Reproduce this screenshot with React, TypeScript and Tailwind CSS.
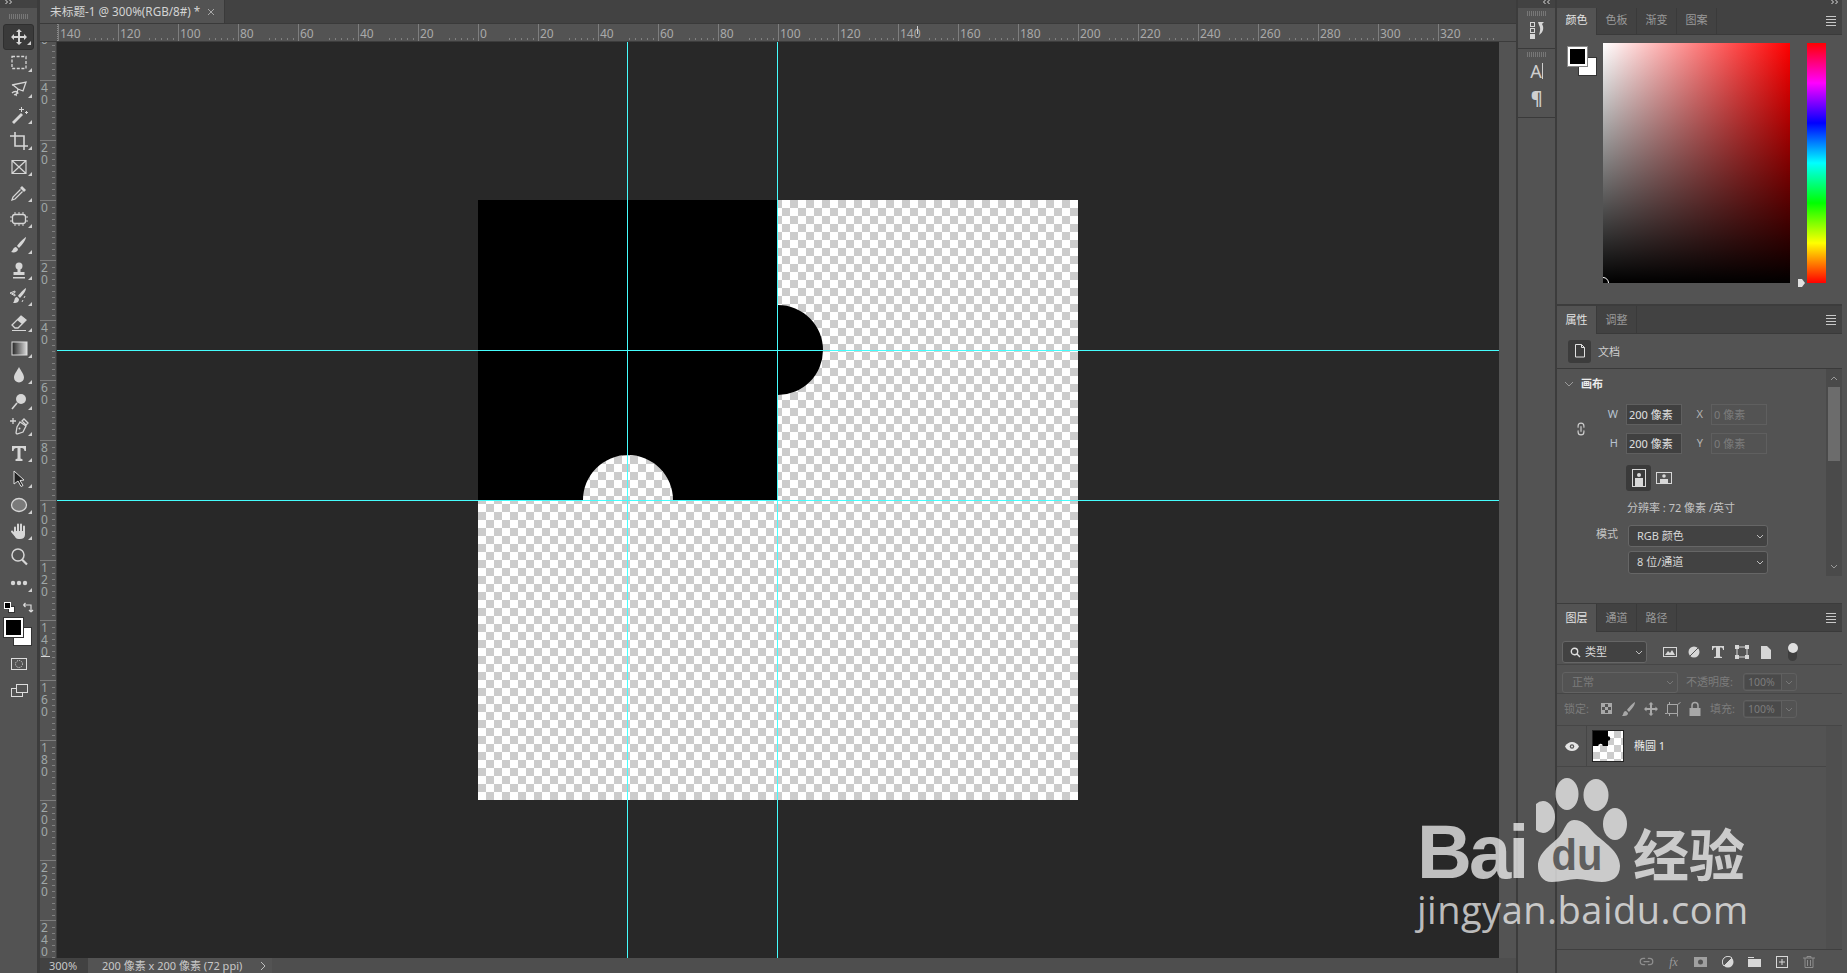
import type { ReactNode } from "react";
import { Link2 } from "lucide-react";

const font = "[font-family:'Noto_Sans','Noto_Sans_CJK_SC',sans-serif]";

function Ico({ children, size = 20 }: { children: ReactNode; size?: number }) {
  return (
    <svg width={size} height={size} viewBox="0 0 20 20" fill="currentColor" stroke="none">
      {children}
    </svg>
  );
}

const line = { fill: "none", stroke: "currentColor", strokeWidth: 1.3 };

const tools: ReactNode[] = [
  <path d="M10 2l3 3h-2v4h4V7l3 3-3 3v-2h-4v4h2l-3 3-3-3h2v-4H5v2l-3-3 3-3v2h4V5H7z" />,
  <rect x="3" y="3.500" width="14" height="12" {...line} strokeDasharray="3 1.600" />,
  <path d="M3 6l14-3-3 9-5-2-5-4zM9 10l-2 7M3 14c2-2 5-2 6 0l-4 2" {...line} />,
  <g><path d="M3 17l9-9 2 2-9 9z" /><path d="M12 2h1v2h2v1h-2v2h-1V5h-2V4h2zM17 6h1v1h1v1h-1v1h-1V8h-1V7h1z" /></g>,
  <path d="M1 5h5v10h10M6 1v4h9v12M15 15v4M16 15h3" {...line} strokeWidth={1.600} />,
  <path d="M3 3.500h14v13H3zM3 3.500l14 13M17 3.500L3 16.500" {...line} strokeWidth={1.200} />,
  <g><path d="M13 3l4 4-2 2-4-4z" /><path d="M11.500 6.500l-7.500 7.500-1 3 3-1 7.500-7.500" {...line} /></g>,
  <g><rect x="3.500" y="5.500" width="13" height="9" rx="2.500" {...line} /><path d="M6 3v2M10 3v2M14 3v2M6 15v2M10 15v2M14 15v2M1 8h2M1 12h2M17 8h2M17 12h2" {...line} strokeWidth={1} /></g>,
  <path d="M17 2c-2 1-7 6-9 9l2 2c3-3 7-8 7-11zM7 12c-3 0-3 4-5 5 3 1 7 0 7-3z" />,
  <g><circle cx="10" cy="5" r="3.500" /><path d="M8.500 8h3v3h4v3h-11v-3h4zM4 16h12v1.500H4z" /></g>,
  <g><path d="M17 1c-2 1-6 5-8 8l2 2c3-3 6-7 6-10zM8 10c-3 0-2 4-4 6 3 0 6 0 6-4z" /><path d="M1 6l5-2v1.500L3 6.500l3 1V9zM13 15l1-2M15 11l1-2" {...line} strokeWidth={1} /></g>,
  <g><path d="M12 3l5 4-8 8H6l-3-3z" {...line} /><path d="M12 3l5 4-4 4-5-4zM3 17h14v1H3z" /></g>,
  <g>
    <defs><linearGradient id="grad"><stop offset="0" stopColor="#222" /><stop offset="1" stopColor="#ddd" /></linearGradient></defs>
    <rect x="3" y="3" width="15" height="13" fill="url(#grad)" stroke="#ddd" strokeWidth="1" />
  </g>,
  <path d="M10 2c2 4 5 7 5 10.500a5 5 0 0 1-10 0C5 9 8 6 10 2z" />,
  <g><circle cx="12" cy="8" r="5" /><path d="M8 12l-5 6" {...line} strokeWidth={1.600} /></g>,
  <g><path d="M11 5l6 4-3 6-6 2-1-1 1-6z" {...line} /><path d="M13 4l2-2 4 4-2 2zM1 4h6M4 1v6" {...line} /><circle cx="10.500" cy="11.500" r="1" /></g>,
  <path d="M3 3h14v5h-1.500c-.3-2-1-3-3-3H11.500v10.500l2 .7V18H6.500v-1.800l2-.7V5H7.500c-2 0-2.700 1-3 3H3z" />,
  <path d="M5 2l10 9-4 .5 3 5-2 1-3-5.500-4 3z" stroke="#ddd" strokeWidth="1" fill="#222" />,
  <ellipse cx="10" cy="10" rx="7.500" ry="6.500" fill="#7a7a7a" stroke="currentColor" strokeWidth="1.300" />,
  <g>
    <path d="M6 6.500v6M9 3.500v8M12 3.500v8M15 5.500v7M3 10.500l3 3.500" fill="none" stroke="currentColor" strokeWidth="2" strokeLinecap="round" />
    <path d="M5.500 10h10.500v3.500c0 3-2 4.500-5 4.500H9.500c-2 0-3-1-4-3z" />
  </g>,
  <g><circle cx="9" cy="8" r="6" {...line} strokeWidth={1.500} /><path d="M13 12.500l5 5" {...line} strokeWidth={2.200} /></g>,
  <g><circle cx="4" cy="10" r="2.200" /><circle cx="10" cy="10" r="2.200" /><circle cx="16" cy="10" r="2.200" /></g>,
];

function Chevrons({ left }: { left?: boolean }) {
  return (
    <svg width="8" height="4" viewBox="0 0 8 4" fill="none" stroke="#dddddd" className={left ? "rotate-180" : ""}>
      <path d="M0.500 0l2 2-2 2M4.500 0l2 2-2 2" />
    </svg>
  );
}

function Tools() {
  return (
    <div className="w-[37px] shrink-0 flex flex-col text-[#d6d6d6] bg-[#535353]">
      <div className="h-[8px] bg-[#424242] pl-[5px]"><Chevrons /></div>
      <div className="h-[16px] flex items-center justify-center">
        <div className="w-[19px] h-[5px] bg-[repeating-linear-gradient(to_right,#777_0,#777_1px,transparent_1px,transparent_2px)]" />
      </div>
      {tools.map((t, i) => (
        <div key={i} className={`relative h-[26px] mx-[3px] flex items-center justify-center rounded-[3px] ${i === 0 ? "bg-[#3a3a3a] border border-[#2f2f2f]" : ""}`}>
          <Ico>{t}</Ico>
          {i !== 20 && <span className="absolute right-[2px] bottom-[4px] w-[4px] h-[4px] bg-[#cfcfcf] [clip-path:polygon(100%_0,100%_100%,0_100%)]" />}
        </div>
      ))}
      {/* default colours + swap */}
      <div className="mt-[3px] h-[16px] flex items-center pl-[4px] gap-[8px]">
        <div className="relative w-[11px] h-[11px]">
          <span className="absolute left-0 top-0 w-[7px] h-[7px] bg-black border border-white z-10" />
          <span className="absolute right-0 bottom-0 w-[7px] h-[7px] bg-white border border-[#333]" />
        </div>
        <svg width="11" height="11" viewBox="0 0 11 11" fill="none" stroke="#ddd" strokeWidth="1.200">
          <path d="M1 3h7v6M0.500 3l2-2M0.500 3l2 2M8 10l-2-2M8 10l2-2" />
        </svg>
      </div>
      <div className="relative h-[30px] mt-[3px] ml-[4px]">
        <span className="absolute left-[9px] top-[9px] w-[19px] h-[19px] bg-white border border-[#333]" />
        <span className="absolute left-0 top-0 w-[19px] h-[19px] bg-black border-2 border-white outline outline-[#333]" />
      </div>
      <div className="mt-[9px] flex justify-center">
        <svg width="18" height="14" viewBox="0 0 18 14" fill="none" stroke="#ddd">
          <rect x="1.500" y="1.500" width="15" height="11" />
          <circle cx="9" cy="7" r="3.500" strokeDasharray="1 1" />
        </svg>
      </div>
      <div className="mt-[12px] flex justify-center">
        <svg width="18" height="14" viewBox="0 0 18 14" fill="none" stroke="#ddd">
          <rect x="1.500" y="5.500" width="11" height="8" />
          <rect x="6.500" y="1.500" width="11" height="8" fill="#535353" />
        </svg>
      </div>
    </div>
  );
}

function HTicks() {
  return (
    <svg className="absolute left-0 bottom-0" width="60" height="6" stroke="#808080">
      {Array.from({ length: 5 }, (_, i) => {
        const x = (i + 5) * 6 + 0.500;
        return <line key={i} x1={x} x2={x} y1={3} y2={5} />;
      })}
    </svg>
  );
}

function VTicks() {
  return (
    <svg className="absolute right-0 top-0" width="6" height="60" stroke="#808080">
      {Array.from({ length: 9 }, (_, i) => {
        const y = (i + 1) * 6 + 0.500;
        return <line key={i} y1={y} y2={y} x1={2} x2={5} />;
      })}
    </svg>
  );
}

const hLabels = [140, 120, 100, 80, 60, 40, 20, 0, 20, 40, 60, 80, 100, 120, 140, 160, 180, 200, 220, 240, 260, 280, 300, 320];
const vLabels = [60, 40, 20, 0, 20, 40, 60, 80, 100, 120, 140, 160, 180, 200, 220, 240];

function HRuler() {
  return (
    <div className="relative h-[18px] flex bg-[#535353] border-b border-[#3c3c3c] overflow-hidden">
      <div className="w-[18px] shrink-0 border-r border-dotted border-[#8c8c8c] bg-[#535353]" />
      {hLabels.map((n, i) => (
        <div key={i} className="relative w-[60px] shrink-0 border-l border-[#7d7d7d] pl-[1px] text-[12px] leading-[20px] text-[#a9a9a9]">
          {n}
          <HTicks />
        </div>
      ))}
      <span className="absolute left-[877px] top-[2px] w-[1px] h-[8px] bg-[#cfcfcf]" />
    </div>
  );
}

function VRuler() {
  return (
    <div className="relative w-[17px] shrink-0 bg-[#535353] overflow-hidden border-r border-[#3c3c3c]">
      <div className="mt-[-22px] flex flex-col">
        {vLabels.map((n, i) => (
          <div key={i} className="relative h-[60px] shrink-0 border-t border-[#7d7d7d] pl-[1px] pt-[1px] text-[12px] leading-[12px] text-[#a0a8a8]">
            {String(n).split("").map((d, j) => (
              <div key={j}>{d}</div>
            ))}
            <VTicks />
          </div>
        ))}
      </div>
      <span className="absolute left-[1px] top-[614px] w-[9px] h-[1px] bg-[#d8d8d8]" />
    </div>
  );
}

function Canvas() {
  return (
    <div className="relative w-[1442px] shrink-0 bg-[#282828] pl-[421px] pt-[158px] overflow-hidden">
      <div className="relative w-[600px] h-[600px] bg-[repeating-conic-gradient(#cccccc_0_25%,#ffffff_0_50%)] bg-[length:16px_16px]">
        <svg className="absolute inset-0" width="600" height="600" viewBox="0 0 600 600">
          <path d="M0 0H300V105A45 45 0 0 1 300 195V300H195A45 45 0 0 0 105 300H0Z" fill="#000" />
        </svg>
      </div>
      <span className="absolute left-[570px] top-0 bottom-0 w-[1px] bg-[#45fdfd]" />
      <span className="absolute left-[720px] top-0 bottom-0 w-[1px] bg-[#45fdfd]" />
      <span className="absolute top-[308px] left-0 right-0 h-[1px] bg-[#45fdfd]" />
      <span className="absolute top-[458px] left-0 right-0 h-[1px] bg-[#45fdfd]" />
    </div>
  );
}

function Main() {
  return (
    <div className="w-[1476px] shrink-0 flex flex-col">
      <div className="h-[24px] bg-[#424242] border-b border-[#3a3a3a] flex">
        <div className="w-[185px] bg-[#535353] flex items-center pl-[10px] text-[11.700px] text-[#d4d4d4] border-r border-[#3a3a3a] whitespace-nowrap">
          未标题-1 @ 300%(RGB/8#) *
          <svg className="ml-[7px]" width="8" height="8" stroke="#a8a8a8" viewBox="0 0 8 8">
            <path d="M1 1l6 6M7 1L1 7" />
          </svg>
        </div>
      </div>
      <HRuler />
      <div className="flex-1 flex min-h-0">
        <VRuler />
        <Canvas />
        <div className="flex-1 bg-[#535353]" />
      </div>
      <div className="h-[15px] flex bg-[#4e4e4e] text-[11px] leading-[15px] text-[#c8c8c8]">
        <div className="w-[48px] bg-[#424242] pl-[9px]">300%</div>
        <div className="w-[184px] bg-[#535353] pl-[14px] flex items-center justify-between pr-[6px] whitespace-nowrap">
          <span>200 像素 x 200 像素 (72 ppi)</span>
          <svg width="6" height="10" viewBox="0 0 6 10" fill="none" stroke="#bdbdbd"><path d="M1 1l4 4-4 4" /></svg>
        </div>
      </div>
    </div>
  );
}

function Grip() {
  return (
    <div className="h-[9px] flex items-center justify-center">
      <div className="w-[19px] h-[5px] bg-[repeating-linear-gradient(to_right,#777_0,#777_1px,transparent_1px,transparent_2px)]" />
    </div>
  );
}

function Dock() {
  return (
    <div className="w-[37px] shrink-0 flex flex-col bg-[#535353] text-[#d6d6d6]">
      <div className="h-[8px] bg-[#424242] pl-[24px]"><Chevrons left /></div>
      <div className="h-[41px] border-b border-[#3a3a3a] pt-[1px]">
        <Grip />
        <div className="flex justify-center pt-[3px]">
          <svg width="16" height="18" viewBox="0 0 16 18">
            <rect x="1.500" y="1.500" width="4" height="4" fill="none" stroke="#d6d6d6" />
            <rect x="1.500" y="7.500" width="4" height="4" fill="none" stroke="#d6d6d6" />
            <rect x="1" y="13" width="5" height="5" fill="#d6d6d6" />
            <path d="M9 1h6l-2 2c2 3 2 8-3 11 1-3 2-7 0-10z" fill="#d6d6d6" />
          </svg>
        </div>
      </div>
      <div className="h-[69px] border-b border-[#3a3a3a] pt-[1px]">
        <Grip />
        <div className="flex justify-center items-center h-[24px] text-[18px] leading-[24px] text-[#cfcfcf]">
          A<span className="w-[1px] h-[16px] bg-[#cfcfcf]" />
        </div>
        <div className="flex justify-center items-center h-[30px] text-[18px] font-bold text-[#cfcfcf]">¶</div>
      </div>
    </div>
  );
}

function Tabs({ items, compact }: { items: string[]; compact?: boolean }) {
  return (
    <div className={`shrink-0 flex bg-[#424242] border-b border-[#3a3a3a] ${compact ? "h-[27px]" : "h-[28px]"}`}>
      {items.map((t, i) => (
        <div key={t} className={`w-[40px] flex items-center justify-center text-[11px] border-r border-[#3a3a3a] ${compact ? "h-[27px] pb-[2px]" : "h-[28px]"} ${i === 0 ? "bg-[#535353] text-[#e4e4e4]" : "text-[#9a9a9a]"}`}>
          {t}
        </div>
      ))}
      <div className="ml-auto mr-[6px] flex flex-col justify-center gap-[2px]">
        <span className="w-[10px] h-[1px] bg-[#c8c8c8]" />
        <span className="w-[10px] h-[1px] bg-[#c8c8c8]" />
        <span className="w-[10px] h-[1px] bg-[#c8c8c8]" />
        <span className="w-[10px] h-[1px] bg-[#c8c8c8]" />
      </div>
    </div>
  );
}

function ColorPanel() {
  return (
    <div className="h-[296px] shrink-0 bg-[#535353] flex flex-col">
      <Tabs items={["颜色", "色板", "渐变", "图案"]} compact />
      <div className="flex pt-[8px]">
        <div className="relative w-[46px] h-[36px] shrink-0">
          <span className="absolute left-[21px] top-[14px] w-[19px] h-[19px] bg-white border border-[#333]" />
          <span className="absolute left-[11px] top-[4px] w-[19px] h-[19px] bg-black border-2 border-white outline outline-[#888]" />
        </div>
        <div className="relative w-[187px] h-[240px] shrink-0 overflow-hidden bg-[linear-gradient(to_top,#000,transparent),linear-gradient(to_right,#fff,#f00)]">
          <span className="absolute left-[-6px] bottom-[-6px] w-[12px] h-[12px] rounded-full border border-white" />
        </div>
        <div className="relative ml-[17px] w-[19px] h-[240px] shrink-0 bg-[linear-gradient(to_bottom,#f00,#f0f,#00f,#0ff,#0f0,#ff0,#f00)]">
          <svg className="absolute left-[-10px] bottom-[-4px]" width="9" height="8" viewBox="0 0 9 8">
            <path d="M1 0h4l3 4-3 4H1z" fill="#e0e0e0" />
          </svg>
        </div>
      </div>
    </div>
  );
}

function Field({ label, value, off }: { label: string; value: string; off?: boolean }) {
  return (
    <div className="flex items-center">
      <span className={`w-[28px] text-right text-[11px] ${off ? "text-[#b4b4b4]" : "text-[#b8c4d0]"}`}>{label}</span>
      <div className={`ml-[8px] w-[56px] h-[21px] border border-[#5f5f5f] pl-[2px] text-[11px] leading-[19px] ${off ? "text-[#7c7c7c]" : "bg-[#404040] text-[#e0e0e0]"}`}>
        {value}
      </div>
    </div>
  );
}

function Select({ text, className }: { text: string; className?: string }) {
  return (
    <div className={`flex items-center justify-between rounded-[3px] bg-[#424242] border border-[#666] pl-[8px] pr-[3px] text-[11px] text-[#d8d8d8] ${className ?? ""}`}>
      <span>{text}</span>
      <svg width="8" height="5" viewBox="0 0 8 5" fill="none" stroke="#bdbdbd"><path d="M1 1l3 3 3-3" /></svg>
    </div>
  );
}

function PropsPanel() {
  return (
    <div className="h-[297px] shrink-0 bg-[#535353] flex flex-col">
      <Tabs items={["属性", "调整"]} />
      <div className="h-[35px] shrink-0 border-b border-[#3a3a3a] flex items-center pl-[11px]">
        <div className="w-[23px] h-[23px] rounded-[3px] bg-[#3c3c3c] flex items-center justify-center">
          <svg width="12" height="14" viewBox="0 0 12 14" fill="none" stroke="#e0e0e0"><path d="M1.500.5h6l3 3v9.500h-9zM7.500.5v3h3" /></svg>
        </div>
        <span className="ml-[7px] mt-[3px] text-[11px] text-[#cfcfcf]">文档</span>
      </div>
      <div className="flex-1 flex items-start">
        <div className="w-[269px] shrink-0">
          <div className="mt-[7px] h-[16px] flex items-center pl-[7px]">
            <svg width="10" height="6" viewBox="0 0 10 6" fill="none" stroke="#9a9a9a"><path d="M1 1l4 4 4-4" /></svg>
            <span className="ml-[7px] text-[11px] font-bold text-[#ececec]">画布</span>
          </div>
          <div className="mt-[12px] flex items-center">
            <div className="w-[33px] pl-[17px] shrink-0 text-[#cfcfcf]"><Link2 size={14} className="rotate-90" /></div>
            <div className="flex flex-col gap-[8px]">
              <div className="flex"><Field label="W" value="200 像素" /><div className="ml-[-7px]"><Field label="X" value="0 像素" off /></div></div>
              <div className="flex"><Field label="H" value="200 像素" /><div className="ml-[-7px]"><Field label="Y" value="0 像素" off /></div></div>
            </div>
          </div>
          <div className="mt-[11px] pl-[69px] flex items-center">
            <div className="w-[25px] h-[26px] rounded-[3px] bg-[#3a3a3a] flex items-center justify-center">
              <svg width="14" height="18" viewBox="0 0 14 18" fill="#d8d8d8"><rect x=".5" y=".5" width="13" height="17" fill="none" stroke="#d8d8d8" /><circle cx="7" cy="6" r="2" /><rect x="3" y="9" width="8" height="8" /></svg>
            </div>
            <div className="ml-[5px]">
              <svg width="16" height="12" viewBox="0 0 16 12" fill="#d8d8d8"><rect x=".5" y=".5" width="15" height="11" fill="none" stroke="#d8d8d8" /><circle cx="8" cy="4" r="1.800" /><rect x="4" y="7" width="8" height="5" /></svg>
            </div>
          </div>
          <div className="mt-[9px] pl-[70px] text-[11px] leading-[16px] text-[#c4c4c4]">分辨率 : 72 像素 /英寸</div>
          <div className="mt-[9px] flex items-center">
            <span className="w-[61px] text-right text-[11px] text-[#c4c4c4] -mt-[3px]">模式</span>
            <Select text="RGB 颜色" className="ml-[10px] w-[140px] h-[22px]" />
          </div>
          <Select text="8 位/通道" className="mt-[4px] ml-[71px] w-[140px] h-[23px]" />
        </div>
        <div className="w-[16px] h-[207px] bg-[#4a4a4a] flex flex-col items-center pt-[1px]">
          <svg className="my-[6px]" width="8" height="5" viewBox="0 0 8 5" fill="none" stroke="#999"><path d="M1 4l3-3 3 3" /></svg>
          <div className="w-[12px] h-[74px] bg-[#6c6c6c]" />
          <svg className="mt-auto mb-[7px]" width="8" height="5" viewBox="0 0 8 5" fill="none" stroke="#999"><path d="M1 1l3 3 3-3" /></svg>
        </div>
      </div>
    </div>
  );
}

const filterIcons: ReactNode[] = [
  <g><rect x="3.500" y="5.500" width="13" height="9" fill="none" stroke="currentColor" /><path d="M5 13l3-4 2 2 2-3 3 5z" /></g>,
  <g><circle cx="10" cy="10" r="5.500" /><path d="M6 14L14 6" stroke="#535353" /></g>,
  <path d="M4 4h12v4h-1c0-2-1-2.500-3-2.500V14.500l2 .5v1H6v-1l2-.5V5.500C6 5.500 5 6 5 8H4z" />,
  <g><rect x="5" y="5" width="10" height="10" fill="none" stroke="currentColor" /><path d="M3 3h4v4H3zM13 3h4v4h-4zM3 13h4v4H3zM13 13h4v4h-4z" /></g>,
  <path d="M5 4h6l4 4v9H5zM9 8h6v9H9z" />,
];

const lockIcons: ReactNode[] = [
  <g><rect x="4.500" y="4.500" width="10" height="10" fill="none" stroke="currentColor" /><path d="M5 5h3v3H5zM11 5h3v3h-3zM8 8h3v3H8zM5 11h3v3H5zM11 11h3v3h-3z" /></g>,
  <path d="M16 3c-2 1-6 5-8 8l2 2c3-3 6-7 6-10zM7 12c-3 0-2 3-4 5 3 0 6 0 6-3z" />,
  <path d="M10 3l2.500 2.500H11V9h3.500V7.500L17 10l-2.500 2.500V11H11v3.500h1.500L10 17l-2.500-2.500H9V11H5.500v1.500L3 10l2.500-2.500V9H9V5.500H7.500z" />,
  <path d="M4.500 5.500h10v9h-10zM6.500 3v2M2 14.500h2M14.500 14.500v3M14.500 5.500l3-2M6.500 15v2" fill="none" stroke="currentColor" />,
  <g><rect x="4.500" y="9" width="11" height="8" /><path d="M7 9V6.500a3 3 0 0 1 6 0V9" fill="none" stroke="currentColor" strokeWidth="1.500" /></g>,
];

function SmallPct() {
  return (
    <div className="w-[54px] h-[18px] rounded-[3px] border border-[#606060] flex items-center text-[10.500px] text-[#7c7c7c]">
      <span className="w-[36px] h-[14px] ml-[1px] bg-[#4a4a4a] pl-[3px] leading-[14px]">100%</span>
      <span className="flex-1 flex justify-center border-l border-[#606060] h-full items-center">
        <svg width="8" height="5" viewBox="0 0 8 5" fill="none" stroke="#777"><path d="M1 1l3 3 3-3" /></svg>
      </span>
    </div>
  );
}

function LayersPanel() {
  return (
    <div className="flex-1 min-h-0 bg-[#535353] flex flex-col">
      <Tabs items={["图层", "通道", "路径"]} />
      <div className="h-[33px] shrink-0 border-b border-[#464646] flex items-center pl-[5px] pt-[8px] text-[#d6d6d6]">
        <div className="w-[85px] h-[22px] rounded-[3px] bg-[#424242] border border-[#666] flex items-center pl-[7px] pr-[3px] text-[11px] text-[#d8d8d8]">
          <svg width="11" height="11" viewBox="0 0 11 11" fill="none" stroke="#e0e0e0" strokeWidth="1.400"><circle cx="4.500" cy="4.500" r="3.200" /><path d="M7 7l3 3" /></svg>
          <span className="ml-[4px]">类型</span>
          <svg className="ml-auto" width="8" height="5" viewBox="0 0 8 5" fill="none" stroke="#bdbdbd"><path d="M1 1l3 3 3-3" /></svg>
        </div>
        <div className="ml-[13px] flex gap-[4px]">
          {filterIcons.map((c, i) => (
            <Ico key={i}>{c}</Ico>
          ))}
        </div>
        <div className="relative ml-[12px] w-[9px] h-[18px] rounded-full bg-[#3e3e3e]">
          <span className="absolute left-[-.5px] top-0 w-[10px] h-[10px] rounded-full bg-[#e0e0e0]" />
        </div>
      </div>
      <div className="h-[29px] shrink-0 border-b border-[#464646] flex items-center pl-[5px] pt-[6px] text-[11px] text-[#7c7c7c]">
        <div className="w-[116px] h-[21px] rounded-[3px] border border-[#626262] flex items-center justify-between pl-[9px] pr-[3px]">
          正常
          <svg width="8" height="5" viewBox="0 0 8 5" fill="none" stroke="#777"><path d="M1 1l3 3 3-3" /></svg>
        </div>
        <span className="ml-[8px] w-[57px] whitespace-nowrap">不透明度:</span>
        <SmallPct />
      </div>
      <div className="h-[32px] shrink-0 border-b border-[#464646] flex items-center pl-[7px] pb-[1px] text-[11px] text-[#7c7c7c]">
        <span className="w-[33px]">锁定:</span>
        <div className="flex gap-[2px] text-[#a8a8a8]">
          {lockIcons.map((c, i) => (
            <Ico key={i}>{c}</Ico>
          ))}
        </div>
        <span className="ml-[5px] w-[33px] whitespace-nowrap">填充:</span>
        <SmallPct />
      </div>
      <div className="flex-1 min-h-0 flex">
        <div className="w-[269px] shrink-0">
          <div className="h-[41px] border-b border-[#464646] flex items-center">
            <div className="w-[30px] h-full flex items-center justify-center border-r border-[#464646] text-[#e4e4e4]">
              <svg width="14" height="9" viewBox="0 0 14 9"><path d="M0 4.500C3-1.500 11-1.500 14 4.500 11 10.500 3 10.500 0 4.500z" fill="currentColor" /><circle cx="7" cy="4.500" r="2.200" fill="#535353" /><circle cx="7" cy="4.500" r="1" fill="currentColor" /></svg>
            </div>
            <div className="relative ml-[5px] w-[32px] h-[32px] border border-[#222] bg-[repeating-conic-gradient(#cccccc_0_25%,#ffffff_0_50%)] bg-[length:14px_14px]">
              <svg className="absolute inset-0" width="30" height="30" viewBox="0 0 30 30">
                <path d="M0 0H15V5.250A2.250 2.250 0 0 1 15 9.750V15H9.750A2.250 2.250 0 0 0 5.250 15H0Z" fill="#000" />
              </svg>
            </div>
            <span className="ml-[10px] text-[11px] text-[#eaeaea]">椭圆 1</span>
          </div>
        </div>
        <div className="flex-1 bg-[#4f4f4f]" />
      </div>
      <div className="h-[24px] shrink-0 border-t border-[#3f3f3f] flex items-center pl-[76px] text-[#c4c4c4]">
        <div className="w-[27px] flex justify-center text-[#8e8e8e]"><Link2 size={15} /></div>
        <div className="w-[27px] text-center text-[12px] italic text-[#9a9a9a] [font-family:'Liberation_Serif',serif]">fx</div>
        <div className="w-[27px] flex justify-center text-[#a0a0a0]">
          <svg width="13" height="10" viewBox="0 0 13 10"><path fillRule="evenodd" d="M0 0h13v10H0zM6.500 2.500a2.500 2.500 0 1 0 0 5 2.500 2.500 0 0 0 0-5z" fill="currentColor" /></svg>
        </div>
        <div className="w-[27px] flex justify-center">
          <svg width="12" height="12" viewBox="0 0 12 12"><circle cx="6" cy="6" r="5.500" fill="#d8d8d8" /><path d="M2 10L10 2a5.500 5.500 0 0 0-8 8z" fill="#535353" stroke="#d8d8d8" /></svg>
        </div>
        <div className="w-[27px] flex justify-center">
          <svg width="13" height="10" viewBox="0 0 13 10" fill="#d8d8d8"><path d="M0 0h6v1H0zM0 2h13v8H0z" /></svg>
        </div>
        <div className="w-[27px] flex justify-center">
          <svg width="12" height="12" viewBox="0 0 12 12" fill="none" stroke="#d8d8d8"><rect x=".5" y=".5" width="11" height="11" /><path d="M3 6h6M6 3v6" /></svg>
        </div>
        <div className="w-[27px] flex justify-center text-[#8e8e8e]">
          <svg width="12" height="12" viewBox="0 0 12 12" fill="none" stroke="currentColor"><path d="M0 2h12M4 2V.5h4V2M2 2v9.500h8V2M4.500 4v6M7.500 4v6" /></svg>
        </div>
      </div>
    </div>
  );
}

function Watermark() {
  return (
    <div className="absolute left-[1415px] top-[775px] w-[340px] h-[165px] pointer-events-none text-white/70">
      <div className="flex items-start h-[109px]">
        <span className="mt-[27px] ml-[2px] w-[118px] text-[76px] leading-[100px] font-bold tracking-[-3px] [font-family:'Liberation_Sans',sans-serif]">Bai</span>
        <svg width="92" height="108" viewBox="0 0 92 108" className="shrink-0 ml-[1px]" fill="currentColor">
          <ellipse cx="31" cy="19" rx="11.500" ry="16" />
          <ellipse cx="60" cy="20" rx="12.500" ry="16" />
          <ellipse cx="7" cy="42" rx="12" ry="16" />
          <ellipse cx="79" cy="49" rx="12" ry="16" />
          <path d="M38 45c9 0 14 6 20 13 9 9 26 18 26 33 0 11-8 16-18 16-10 0-17-3-25-3s-16 3-25 3C6 107 2 99 2 91c0-13 12-20 21-29 6-7 7-17 15-17z" />
          <text x="41" y="95" textAnchor="middle" fontSize="44" fontWeight="700" fill="#5f5f5f" textLength="51" lengthAdjust="spacingAndGlyphs" fontFamily="'Liberation Sans', sans-serif">du</text>
        </svg>
        <span className="mt-[27px] ml-[5px] text-[56px] leading-[100px] font-bold [font-family:'Noto_Sans_CJK_SC',sans-serif]">经验</span>
      </div>
      <div className="ml-[2px] text-[38px] leading-[50px] tracking-[0.500px] whitespace-nowrap [font-family:'Open_Sans',sans-serif]">jingyan.baidu.com</div>
    </div>
  );
}

export default function App() {
  return (
    <div className={`relative w-[1847px] h-[973px] overflow-hidden flex bg-[#535353] ${font}`}>
      <Tools />
      <div className="w-[3px] shrink-0 bg-[#3c3c3c]" />
      <Main />
      <div className="w-[2px] shrink-0 bg-[#3c3c3c]" />
      <Dock />
      <div className="w-[2px] shrink-0 bg-[#3c3c3c]" />
      <div className="w-[285px] shrink-0 flex flex-col">
        <div className="h-[8px] bg-[#424242] shrink-0 flex justify-end pr-[3px]"><Chevrons /></div>
        <ColorPanel />
        <div className="h-[2px] shrink-0 bg-[#3c3c3c]" />
        <PropsPanel />
        <div className="h-[1px] shrink-0 bg-[#3c3c3c]" />
        <LayersPanel />
      </div>
      <Watermark />
    </div>
  );
}
